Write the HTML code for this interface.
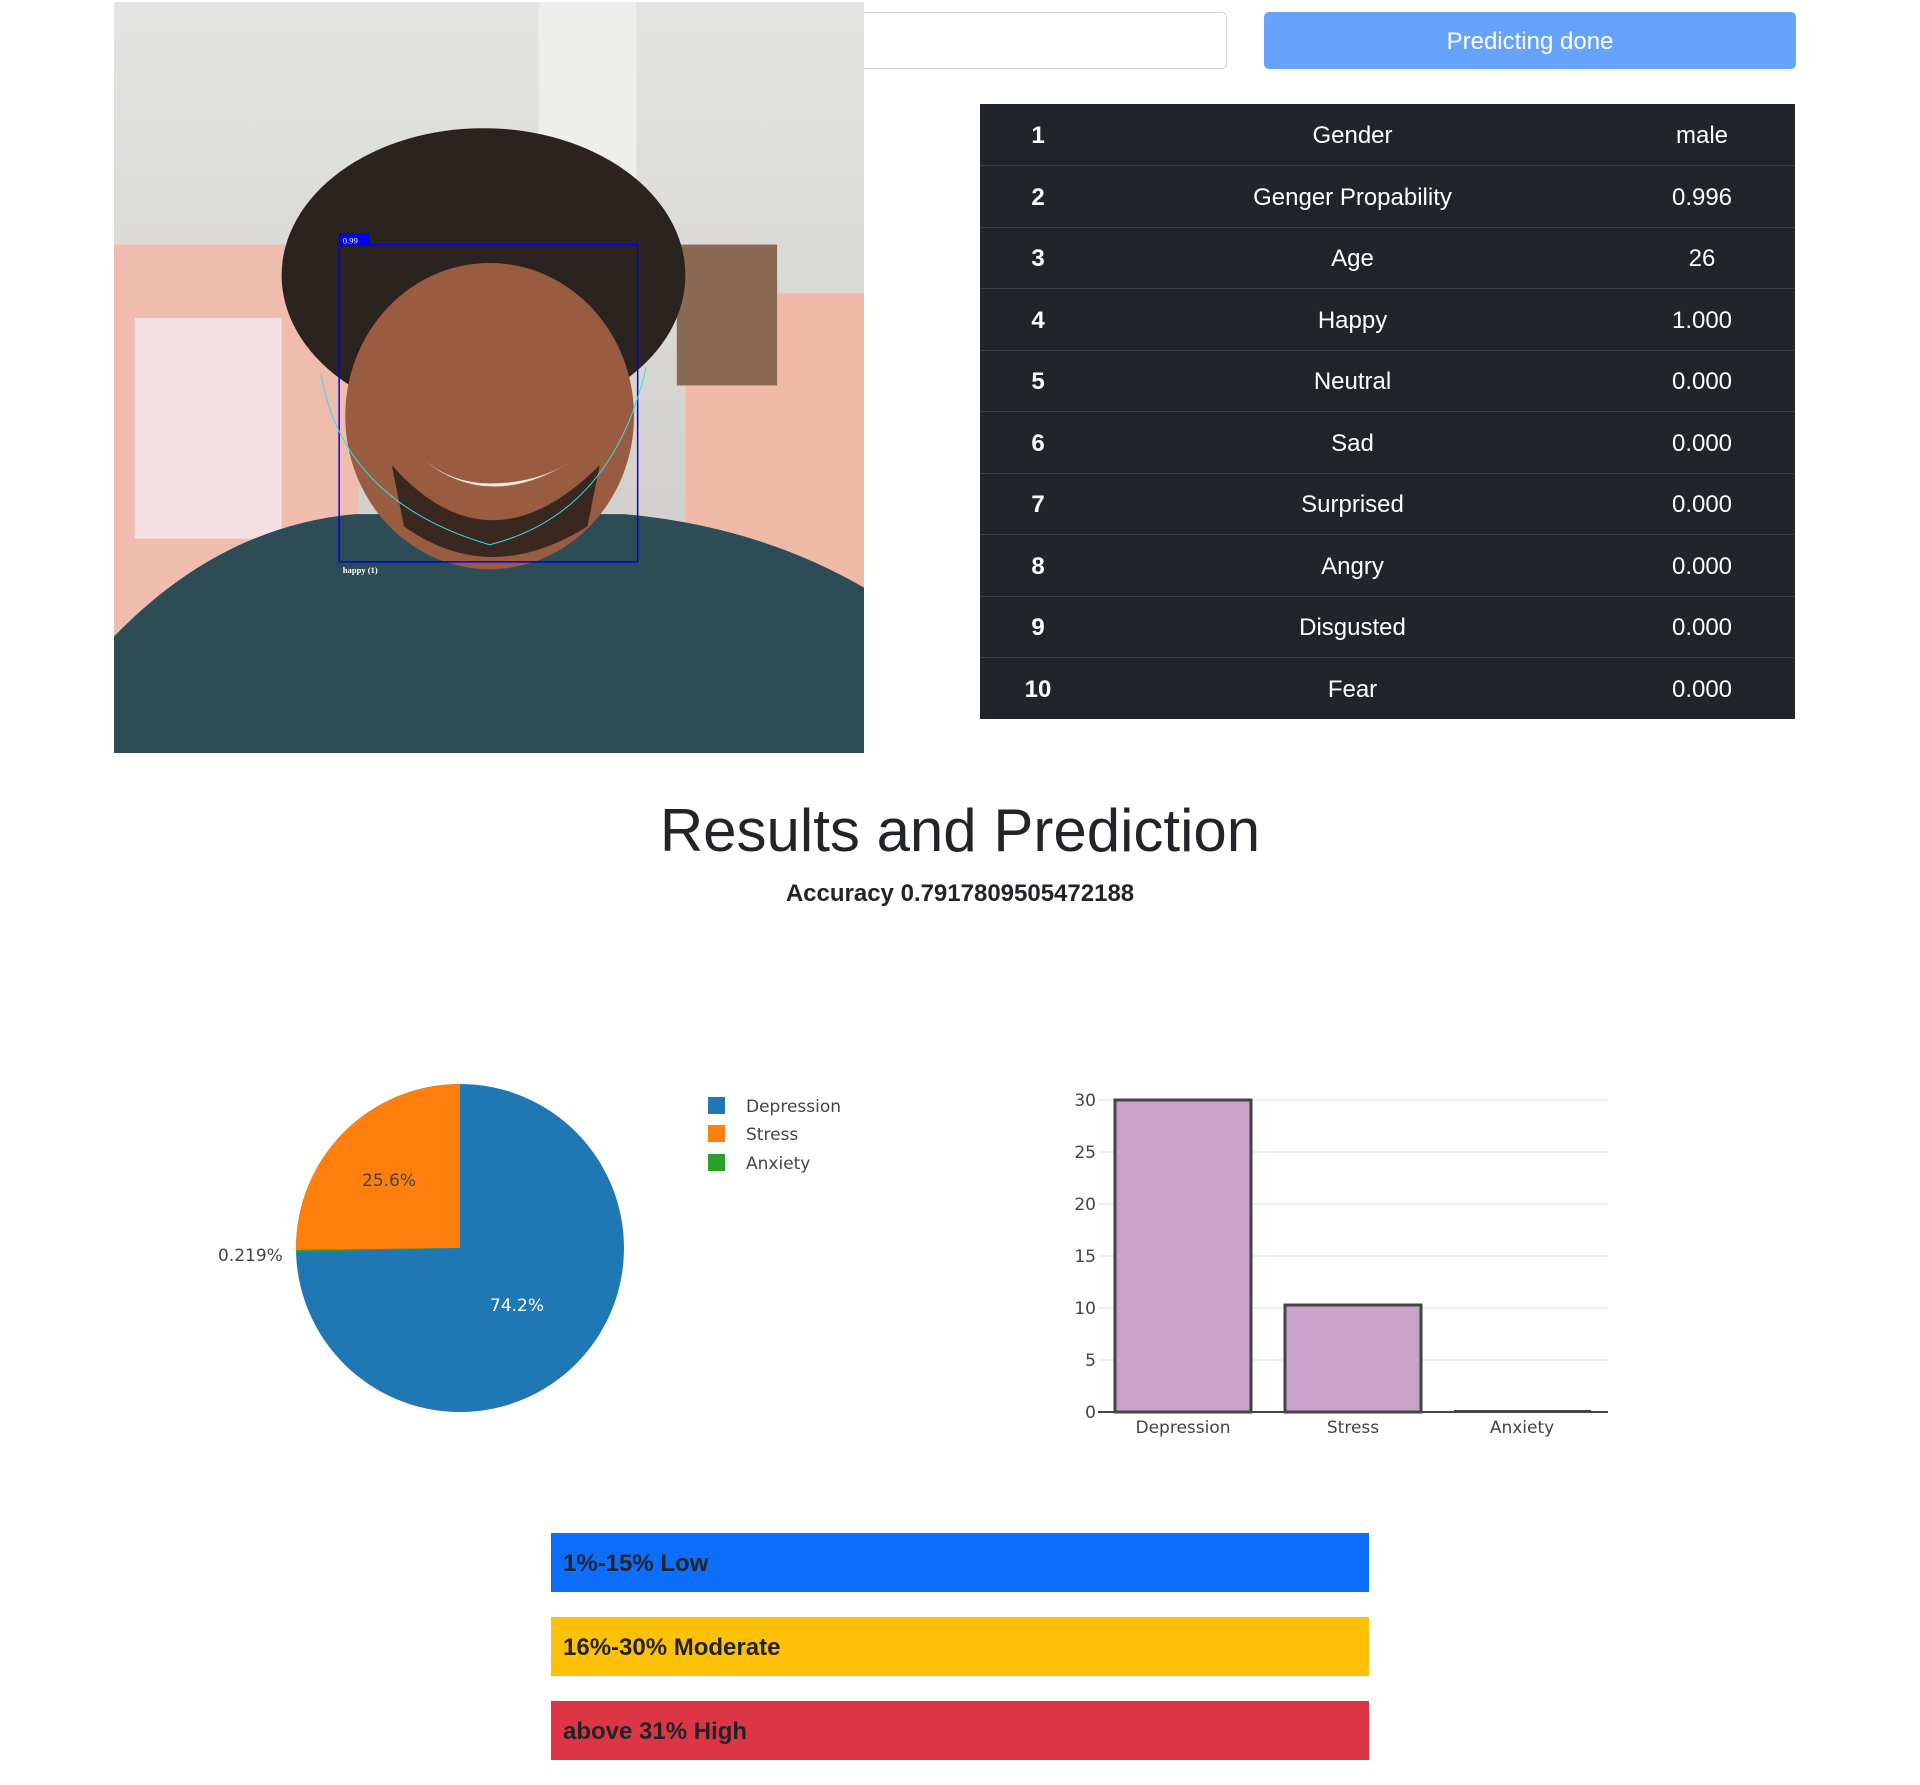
<!DOCTYPE html>
<html><head><meta charset="utf-8"><style>
*{margin:0;padding:0;box-sizing:border-box}
body{width:1920px;height:1785px;background:#fff;position:relative;font-family:"Liberation Sans","DejaVu Sans",sans-serif;color:#212529;overflow:hidden}
.abs{position:absolute}
.inp{left:864px;top:12px;width:363px;height:57px;border:1px solid #ced4da;border-left:none;border-radius:0 5px 5px 0;background:#fff}
.btn{left:1264px;top:12px;width:532px;height:57px;background:#66a3fe;border-radius:5px;color:#fff;font-size:24px;line-height:60px;text-align:center}
table{position:absolute;left:980px;top:104px;width:815px;border-collapse:collapse;background:#212529;color:#fff;font-size:24px}
td{height:61.5px;border-top:1px solid #3a3f44;text-align:center;padding-top:3px}
tr:first-child td{border-top:none}
td.n{width:116px;font-weight:bold}
td.v{width:186px}
h1{position:absolute;left:0;width:1920px;top:795px;text-align:center;font-size:60px;font-weight:500;line-height:72px}
.acc{position:absolute;left:0;width:1920px;top:880px;text-align:center;font-size:24px;font-weight:bold}
.al{position:absolute;left:551px;width:818px;height:59px;font-size:24px;font-weight:bold;line-height:62px;padding-left:12px;color:#212529}
</style></head><body>
<svg class="abs" style="left:114px;top:2px" width="750" height="751" viewBox="93 2 613 613" preserveAspectRatio="none">
<defs><linearGradient id="w" x1="0" y1="0" x2="0" y2="1"><stop offset="0" stop-color="#e4e4e2"/><stop offset="1" stop-color="#c9c7c4"/></linearGradient></defs>
<rect x="93" y="2" width="613" height="613" fill="url(#w)"/>
<rect x="440" y="2" width="80" height="260" fill="#eeeeec"/>
<rect x="93" y="200" width="200" height="360" fill="#f0bcae"/>
<rect x="560" y="240" width="146" height="320" fill="#f1b9a8"/>
<rect x="110" y="260" width="120" height="180" fill="#f3dfe4"/>
<rect x="553" y="200" width="82" height="115" fill="#8b6a55"/>
<path d="M93 520 Q180 430 290 420 L510 420 Q620 430 706 480 L706 615 L93 615Z" fill="#2e4c55"/>
<ellipse cx="395" cy="225" rx="165" ry="120" fill="#2b2320"/>
<ellipse cx="400" cy="340" rx="118" ry="125" fill="#9a5c40"/>
<path d="M320 380 Q400 470 490 380 L480 430 Q400 480 330 430Z" fill="#3a2820"/>
<path d="M345 375 Q400 420 470 375 Q440 395 400 395 Q370 395 345 375Z" fill="#f4ece4"/>
<rect x="277" y="200" width="244" height="259" fill="none" stroke="#0000ee" stroke-width="1.2"/>
<rect x="277" y="191" width="25" height="10" fill="#0000ee"/>
<text x="280" y="199" font-size="7" fill="#fff" font-family="Liberation Serif">0.99</text>
<text x="280" y="468" font-size="7" fill="#fff" font-family="Liberation Serif" font-weight="bold">happy (1)</text>
<path d="M262 305 Q280 410 400 445 Q500 420 528 300" fill="none" stroke="#30e0e0" stroke-width="0.8"/>
</svg>
<div class="abs inp"></div>
<div class="abs btn">Predicting done</div>
<table>
<tr><td class="n">1</td><td>Gender</td><td class="v">male</td></tr>
<tr><td class="n">2</td><td>Genger Propability</td><td class="v">0.996</td></tr>
<tr><td class="n">3</td><td>Age</td><td class="v">26</td></tr>
<tr><td class="n">4</td><td>Happy</td><td class="v">1.000</td></tr>
<tr><td class="n">5</td><td>Neutral</td><td class="v">0.000</td></tr>
<tr><td class="n">6</td><td>Sad</td><td class="v">0.000</td></tr>
<tr><td class="n">7</td><td>Surprised</td><td class="v">0.000</td></tr>
<tr><td class="n">8</td><td>Angry</td><td class="v">0.000</td></tr>
<tr><td class="n">9</td><td>Disgusted</td><td class="v">0.000</td></tr>
<tr><td class="n">10</td><td>Fear</td><td class="v">0.000</td></tr>
</table>
<h1>Results and Prediction</h1>
<div class="acc">Accuracy 0.7917809505472188</div>
<svg class="abs" style="left:0;top:1050px" width="1920" height="420" font-family="'DejaVu Sans',sans-serif" font-size="17">
<circle cx="460" cy="198" r="164" fill="#1f77b4"/>
<path d="M460 198 L460 34 A164 164 0 0 0 296 200 Z" fill="#ff7f0e"/>
<path d="M460 198 L296 200 L296 202 Z" fill="#2ca02c"/>
<text x="362" y="136" fill="#444">25.6%</text>
<text x="490" y="261" fill="#fff">74.2%</text>
<text x="218" y="211" fill="#444">0.219%</text>
<rect x="708" y="47" width="17" height="17" fill="#1f77b4"/><text x="746" y="62" fill="#444">Depression</text>
<rect x="708" y="75" width="17" height="17" fill="#ff7f0e"/><text x="746" y="90" fill="#444">Stress</text>
<rect x="708" y="104" width="17" height="17" fill="#2ca02c"/><text x="746" y="119" fill="#444">Anxiety</text>
<g stroke="#e8e8e8" stroke-width="1.5">
<line x1="1098" y1="50" x2="1608" y2="50"/><line x1="1098" y1="102" x2="1608" y2="102"/><line x1="1098" y1="154" x2="1608" y2="154"/><line x1="1098" y1="206" x2="1608" y2="206"/><line x1="1098" y1="258" x2="1608" y2="258"/><line x1="1098" y1="310" x2="1608" y2="310"/></g>
<g text-anchor="end" fill="#444"><text x="1096" y="56">30</text><text x="1096" y="108">25</text><text x="1096" y="160">20</text><text x="1096" y="212">15</text><text x="1096" y="264">10</text><text x="1096" y="316">5</text><text x="1096" y="368">0</text></g>
<rect x="1115" y="50" width="136" height="312" fill="#c8a2c8" stroke="#444" stroke-width="3"/>
<rect x="1285" y="255" width="136" height="107" fill="#c8a2c8" stroke="#444" stroke-width="3"/>
<rect x="1454" y="360" width="137" height="2" fill="#444"/>
<line x1="1098" y1="362" x2="1608" y2="362" stroke="#444" stroke-width="2"/>
<g text-anchor="middle" fill="#444"><text x="1183" y="383">Depression</text><text x="1353" y="383">Stress</text><text x="1522" y="383">Anxiety</text></g>
</svg>
<div class="al" style="top:1533px;background:#0d6efd">1%-15% Low</div>
<div class="al" style="top:1617px;background:#ffc107">16%-30% Moderate</div>
<div class="al" style="top:1701px;background:#dc3545">above 31% High</div>
</body></html>
